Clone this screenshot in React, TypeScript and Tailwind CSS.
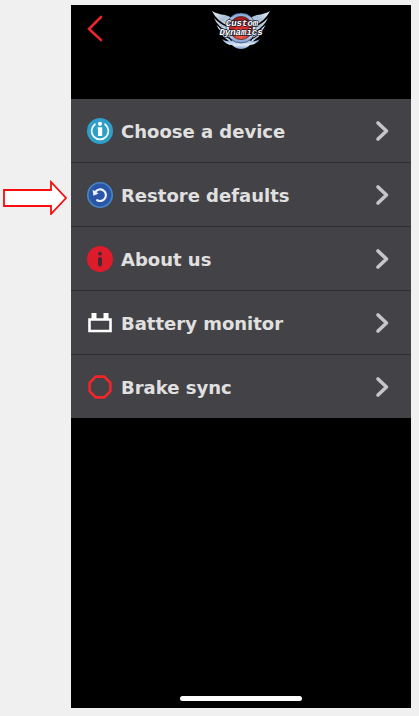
import type { ReactNode } from "react";

function ChooseIcon() {
  return (
    <svg viewBox="0 0 26 26" className="size-[26px]" aria-hidden="true">
      <circle cx="13" cy="13" r="13" fill="#2f9fc9" />
      <path
        d="M8 6.2A8.4 8.4 0 1 0 18 6.2"
        fill="none"
        stroke="#f5fbfd"
        strokeWidth="1.7"
        strokeLinecap="round"
      />
      <circle cx="13" cy="5.8" r="2.1" fill="#fff" />
      <path d="M10.6 9.2H15.2V18H11V11H10.6Z" fill="#fff" />
    </svg>
  );
}

function RestoreIcon() {
  return (
    <svg viewBox="0 0 26 26" className="size-[26px]" aria-hidden="true">
      <circle cx="13" cy="13" r="12.2" fill="#2b55a6" stroke="#4486c8" strokeWidth="1.6" />
      <path
        d="M8.4 9.8A5.8 5.8 0 1 1 10.2 18.2"
        fill="none"
        stroke="#eef3fa"
        strokeWidth="2.2"
        strokeLinecap="round"
      />
      <path d="M5.6 7.8L6.4 13.8L11.6 11.6Z" fill="#eef3fa" />
    </svg>
  );
}

function AboutIcon() {
  return (
    <svg viewBox="0 0 26 26" className="size-[26px]" aria-hidden="true">
      <circle cx="13" cy="13" r="13" fill="#de1b2b" />
      <circle cx="13" cy="7.6" r="1.9" fill="#3b2c33" />
      <path d="M13 13V18.6" stroke="#3b2c33" strokeWidth="3.8" strokeLinecap="round" />
    </svg>
  );
}

function BatteryIcon() {
  return (
    <svg viewBox="0 0 26 26" className="size-[26px]" aria-hidden="true">
      <path d="M4.5 3H9.5V9H4.5ZM16.5 3H21.5V9H16.5Z" fill="#fff" />
      <path d="M2.5 9.5H23.5V21H2.5Z" fill="none" stroke="#fff" strokeWidth="2.6" />
    </svg>
  );
}

function BrakeIcon() {
  return (
    <svg viewBox="0 0 26 26" className="size-[26px]" aria-hidden="true">
      <path
        d="M8.8 2.6H17.2L23.4 8.8V17.2L17.2 23.4H8.8L2.6 17.2V8.8Z"
        fill="none"
        stroke="#f0262b"
        strokeWidth="2.6"
      />
    </svg>
  );
}

function Logo() {
  return (
    <svg viewBox="0 0 60 42" className="h-[42px] w-[60px]" role="img" aria-label="Custom Dynamics">
      <defs>
        <linearGradient id="wing" x1="0" y1="0" x2="1" y2="1">
          <stop offset="0" stopColor="#f4f8fc" />
          <stop offset="0.55" stopColor="#a9bfd6" />
          <stop offset="1" stopColor="#e3ebf4" />
        </linearGradient>
        <linearGradient id="ring" x1="0" y1="0" x2="0" y2="1">
          <stop offset="0" stopColor="#7fa6dc" />
          <stop offset="0.6" stopColor="#e2ebf6" />
          <stop offset="1" stopColor="#7c9ad0" />
        </linearGradient>
        <radialGradient id="ball" cx="0.5" cy="0.85" r="0.8">
          <stop offset="0" stopColor="#f2614a" />
          <stop offset="0.6" stopColor="#d02521" />
          <stop offset="1" stopColor="#a01a1a" />
        </radialGradient>
      </defs>
      <g id="left-wing" fill="url(#wing)">
        <path d="M1 2Q6 5 14 6Q19 7 21 10L17 17Q6 12 1 2Z" />
        <path d="M3 9Q8 14.5 17 18.5V23Q7 18 3 9Z" />
        <path d="M5.5 16Q10 21 17 24.5L18 28.5Q9 24 5.5 16Z" />
        <path d="M9 23Q13 27 18.5 30L21 33.5Q13 30 9 23Z" />
      </g>
      <use href="#left-wing" transform="matrix(-1 0 0 1 60 0)" />
      <path
        d="M11 30Q17 34 22 31H38Q43 34 49 30Q45 36 39 36Q35 40 30 40Q25 40 21 36Q15 36 11 30Z"
        fill="url(#ring)"
      />
      <circle cx="30" cy="19" r="15" fill="url(#ring)" stroke="#232c46" strokeWidth="0.6" />
      <circle cx="30" cy="19" r="11.6" fill="url(#ball)" stroke="#51302f" strokeWidth="0.8" />
      <g
        fill="#fff"
        stroke="#171a2b"
        strokeWidth="1.4"
        paintOrder="stroke"
        textAnchor="middle"
        className="font-['Liberation_Mono',monospace] text-[9px] font-bold italic"
      >
        <text x="31" y="17">Custom</text>
        <text x="30" y="26">Dynamics</text>
      </g>
    </svg>
  );
}

const items: { label: string; icon: ReactNode }[] = [
  { label: "Choose a device", icon: <ChooseIcon /> },
  { label: "Restore defaults", icon: <RestoreIcon /> },
  { label: "About us", icon: <AboutIcon /> },
  { label: "Battery monitor", icon: <BatteryIcon /> },
  { label: "Brake sync", icon: <BrakeIcon /> },
];

export default function App() {
  return (
    <div className="flex min-h-screen bg-[#f0f0f0] pt-[5px] pr-2 pb-2 font-['DejaVu_Sans',sans-serif]">
      <div className="w-[71px] shrink-0 pt-[174px] pl-[3px]">
        <svg viewBox="0 0 66 36" className="h-9 w-[66px]" aria-hidden="true">
          <path
            d="M1 11H48V3L63 19L48 35V27H1Z"
            fill="#fff"
            stroke="#f80d0d"
            strokeWidth="1.8"
          />
        </svg>
      </div>

      <main className="flex flex-1 flex-col bg-black">
        <header className="grid h-[94px] grid-cols-3 items-start">
          <button type="button" aria-label="Back" className="ml-4 mt-2.5 w-4">
            <svg viewBox="0 0 16 27" className="h-[27px] w-4">
              <path
                d="M14 2L2 14L14 25"
                fill="none"
                stroke="#e9262b"
                strokeWidth="2.6"
                strokeLinecap="round"
              />
            </svg>
          </button>
          <div className="mt-1 flex justify-center">
            <Logo />
          </div>
        </header>

        <nav className="flex flex-col divide-y divide-[#2d2c31]">
          {items.map((item) => (
            <button
              key={item.label}
              type="button"
              className="flex w-full items-center bg-[#434246] pr-5 pl-4 text-left"
            >
              {item.icon}
              <span className="ml-2 flex h-[63px] flex-1 items-center pt-0.5 text-[18px] font-bold whitespace-nowrap text-[#e0e0e0]">
                {item.label}
              </span>
              <svg viewBox="0 0 16 22" className="h-[22px] w-4" aria-hidden="true">
                <path
                  d="M3 3L11.5 11L3 19"
                  fill="none"
                  stroke="#c6c6c8"
                  strokeWidth="3.6"
                  strokeLinecap="round"
                  strokeLinejoin="round"
                />
              </svg>
            </button>
          ))}
        </nav>

        <div className="mx-auto mt-auto mb-[7px] h-[5px] w-[122px] rounded-full bg-white" />
      </main>
    </div>
  );
}
